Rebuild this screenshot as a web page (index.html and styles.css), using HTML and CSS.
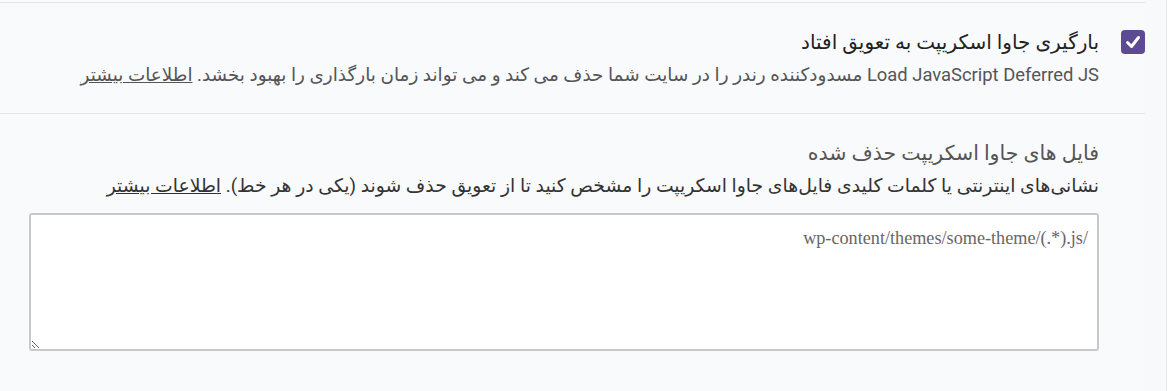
FILE: index.html
```html
<!DOCTYPE html>
<html lang="fa" dir="rtl">
<head>
<meta charset="utf-8">
<link rel="stylesheet" href="styles.css">
</head>
<body>
<div class="page">
  <div class="edge"></div>
  <div class="gutter"></div>
  <div class="main">
    <section class="row">
      <span class="check" role="checkbox" aria-checked="true">
        <svg viewBox="0 0 24 24" width="24" height="24"><path d="M6.5 12.5 L10.5 16.5 L17.5 7.5" fill="none" stroke="#fff" stroke-width="3" stroke-linecap="round" stroke-linejoin="round"/></svg>
      </span>
      <div class="text">
        <div class="title">بارگیری جاوا اسکریپت به تعویق افتاد</div>
        <div class="desc">Load JavaScript Deferred JS مسدودکننده رندر را در سایت شما حذف می کند و می تواند زمان بارگذاری را بهبود بخشد. <a href="#">اطلاعات بیشتر</a></div>
      </div>
    </section>
    <section class="field">
      <div class="label">فایل های جاوا اسکریپت حذف شده</div>
      <div class="hint">نشانی‌های اینترنتی یا کلمات کلیدی فایل‌های جاوا اسکریپت را مشخص کنید تا از تعویق حذف شوند (یکی در هر خط). <a href="#">اطلاعات بیشتر</a></div>
      <textarea class="box">/wp-content/themes/some-theme/(.*).js</textarea>
    </section>
  </div>
</div>
</body>
</html>
```
FILE: styles.css
```css
html, body { margin: 0; padding: 0; }
body {
  background: #f9fafc;
  font-family: Roboto, "DejaVu Sans", sans-serif;
  color: #333;
}
.page { display: flex; height: 391px; }
.edge { width: 6px; background: #fff; border-left: 1px solid #e6e7eb; }
.gutter { width: 21px; background: #f8f9fb; }
.main { width: 1145px; padding-top: 2px; }
.row {
  display: flex;
  gap: 22px;
  align-items: flex-start;
  border-top: 1px solid #e3e5e9;
  border-bottom: 1px solid #e3e5e9;
  padding: 27px 0 26px;
}
.check {
  width: 24px; height: 24px;
  background: #5c4a93;
  border-radius: 4px;
  display: flex;
  flex: none;
}
.title { font-size: 20px; line-height: 24px; color: #222; }
.desc { font-size: 18.4px; line-height: 24px; color: #555; margin-top: 9px; white-space: nowrap; }
a { color: #555; text-decoration: underline; }
.field { padding: 27px 46px 0 0; }
.label { font-size: 20.5px; line-height: 24px; color: #555; }
.hint { font-size: 18.8px; line-height: 24px; color: #333; margin-top: 9px; white-space: nowrap; }
.hint a { color: #333; }
.box {
  display: block;
  box-sizing: border-box;
  margin: 15px 0 0 29px;
  width: 1070px;
  height: 138px;
  border: 2px solid #c7c8ce;
  border-radius: 3px;
  background: #fff;
  font-family: "Liberation Serif", serif;
  font-size: 18.2px;
  color: #666;
  padding: 12px 9px;
  line-height: 22px;
}
```
